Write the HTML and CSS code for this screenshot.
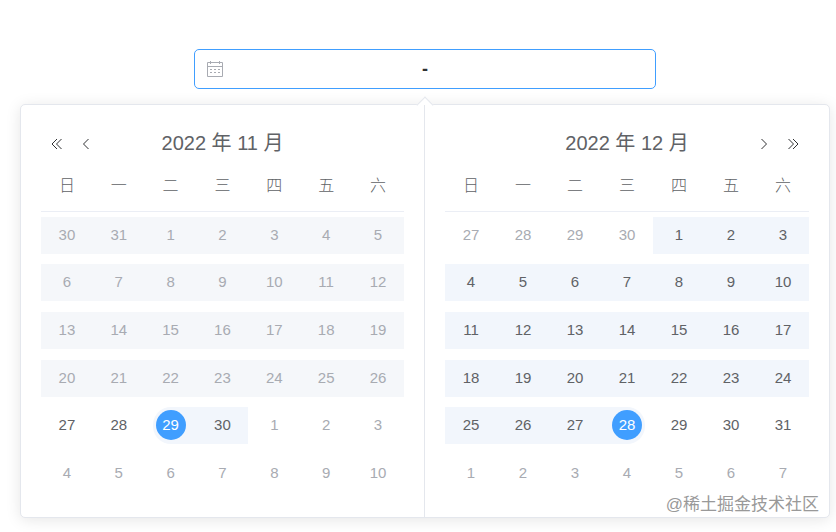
FILE: index.html
```html
<!DOCTYPE html>
<html lang="zh-CN">
<head>
    <meta charset="UTF-8">
    <meta name="viewport" content="width=device-width, initial-scale=1.0">
    <title>日期范围选择</title>
    <link rel="stylesheet" href="styles.css">
</head>
<body>
    <div class="container">
        <!-- 输入框 -->
        <div class="range-editor">
            <svg class="icon-date" viewBox="0 0 18 18" width="18" height="18" fill="none" stroke="#a8abb2">
                <path d="M1.500 2.500h15v14h-15zM1.500 6.500h15M4.500 1v3M13.500 1v3"/>
                <path d="M4 9.500h2M8 9.500h2M12 9.500h2M4 12.500h2M8 12.500h2M12 12.500h2"/>
            </svg>
            <input class="range-input" type="text" aria-label="开始日期">
            <span class="range-separator">-</span>
            <input class="range-input" type="text" aria-label="结束日期">
        </div>

        <!-- 日期面板 -->
        <div class="picker-panel">
            <div class="panel-arrow"></div>
            <div class="calendar calendar-left">
                <div class="calendar-header">
                    <div class="header-buttons">
                        <button type="button" class="icon-btn" aria-label="上一年">
                            <svg viewBox="0 0 12 12" width="12" height="12"><path d="M6 1L1 6l5 5M10.500 1l-5 5 5 5"/></svg>
                        </button>
                        <button type="button" class="icon-btn" aria-label="上个月">
                            <svg viewBox="0 0 12 12" width="12" height="12"><path d="M7.500 1l-5 5 5 5"/></svg>
                        </button>
                    </div>
                    <div class="calendar-title">2022 年 11 月</div>
                    <div class="header-buttons"></div>
                </div>
                <table class="date-table">
                    <thead>
                        <tr><th>日</th><th>一</th><th>二</th><th>三</th><th>四</th><th>五</th><th>六</th></tr>
                    </thead>
                    <tbody>
                        <tr class="disabled"><td><div>30</div></td><td><div>31</div></td><td><div>1</div></td><td><div>2</div></td><td><div>3</div></td><td><div>4</div></td><td><div>5</div></td></tr>
                        <tr class="disabled"><td><div>6</div></td><td><div>7</div></td><td><div>8</div></td><td><div>9</div></td><td><div>10</div></td><td><div>11</div></td><td><div>12</div></td></tr>
                        <tr class="disabled"><td><div>13</div></td><td><div>14</div></td><td><div>15</div></td><td><div>16</div></td><td><div>17</div></td><td><div>18</div></td><td><div>19</div></td></tr>
                        <tr class="disabled"><td><div>20</div></td><td><div>21</div></td><td><div>22</div></td><td><div>23</div></td><td><div>24</div></td><td><div>25</div></td><td><div>26</div></td></tr>
                        <tr>
                            <td><div>27</div></td>
                            <td><div>28</div></td>
                            <td class="in-range start-date"><div><span>29</span></div></td>
                            <td class="in-range"><div>30</div></td>
                            <td class="other-month"><div>1</div></td>
                            <td class="other-month"><div>2</div></td>
                            <td class="other-month"><div>3</div></td>
                        </tr>
                        <tr class="other-month"><td><div>4</div></td><td><div>5</div></td><td><div>6</div></td><td><div>7</div></td><td><div>8</div></td><td><div>9</div></td><td><div>10</div></td></tr>
                    </tbody>
                </table>
            </div>
            <div class="calendar">
                <div class="calendar-header">
                    <div class="header-buttons"></div>
                    <div class="calendar-title">2022 年 12 月</div>
                    <div class="header-buttons header-buttons-right">
                        <button type="button" class="icon-btn" aria-label="下个月">
                            <svg viewBox="0 0 12 12" width="12" height="12"><path d="M4.500 1l5 5-5 5"/></svg>
                        </button>
                        <button type="button" class="icon-btn" aria-label="下一年">
                            <svg viewBox="0 0 12 12" width="12" height="12"><path d="M1.500 1l5 5-5 5M6 1l5 5-5 5"/></svg>
                        </button>
                    </div>
                </div>
                <table class="date-table">
                    <thead>
                        <tr><th>日</th><th>一</th><th>二</th><th>三</th><th>四</th><th>五</th><th>六</th></tr>
                    </thead>
                    <tbody>
                        <tr>
                            <td class="other-month"><div>27</div></td>
                            <td class="other-month"><div>28</div></td>
                            <td class="other-month"><div>29</div></td>
                            <td class="other-month"><div>30</div></td>
                            <td class="in-range"><div>1</div></td>
                            <td class="in-range"><div>2</div></td>
                            <td class="in-range"><div>3</div></td>
                        </tr>
                        <tr class="in-range"><td><div>4</div></td><td><div>5</div></td><td><div>6</div></td><td><div>7</div></td><td><div>8</div></td><td><div>9</div></td><td><div>10</div></td></tr>
                        <tr class="in-range"><td><div>11</div></td><td><div>12</div></td><td><div>13</div></td><td><div>14</div></td><td><div>15</div></td><td><div>16</div></td><td><div>17</div></td></tr>
                        <tr class="in-range"><td><div>18</div></td><td><div>19</div></td><td><div>20</div></td><td><div>21</div></td><td><div>22</div></td><td><div>23</div></td><td><div>24</div></td></tr>
                        <tr>
                            <td class="in-range"><div>25</div></td>
                            <td class="in-range"><div>26</div></td>
                            <td class="in-range"><div>27</div></td>
                            <td class="in-range end-date"><div><span>28</span></div></td>
                            <td><div>29</div></td>
                            <td><div>30</div></td>
                            <td><div>31</div></td>
                        </tr>
                        <tr class="other-month"><td><div>1</div></td><td><div>2</div></td><td><div>3</div></td><td><div>4</div></td><td><div>5</div></td><td><div>6</div></td><td><div>7</div></td></tr>
                    </tbody>
                </table>
            </div>
            <div class="watermark">@稀土掘金技术社区</div>
        </div>
    </div>
</body>
</html>
```
FILE: styles.css
```css
* {
    box-sizing: border-box;
}

body {
    margin: 0;
    background-color: #fff;
    color: #606266;
    font-family: "Liberation Sans", "Noto Sans CJK SC", sans-serif;
    font-size: 15px;
}

.container {
    padding: 49px 6px 14px 20px;
}

/* 输入框 */
.range-editor {
    position: relative;
    z-index: 1;
    display: flex;
    align-items: center;
    max-width: 462px;
    height: 40px;
    margin: 0 auto 15px;
    padding: 0 11px;
    background-color: #fff;
    border: 1px solid #409eff;
    border-radius: 5px;
}

.icon-date {
    flex: none;
}

.range-input {
    flex: 1;
    min-width: 0;
    height: 30px;
    padding: 0;
    border: none;
    outline: none;
    background: none;
    color: #606266;
    font: inherit;
    text-align: center;
}

.range-input:last-child {
    margin-right: 18px;
}

.range-separator {
    color: #303133;
    font-size: 18px;
    font-weight: bold;
}

/* 日期面板 */
.picker-panel {
    position: relative;
    display: flex;
    background-color: #fff;
    border: 1px solid #e4e7ed;
    border-radius: 5px;
    box-shadow: 0 2px 15px rgba(0, 0, 0, 0.1);
}

.panel-arrow {
    position: absolute;
    top: -6px;
    left: 50%;
    width: 12px;
    height: 12px;
    margin-left: -6px;
    background-color: #fff;
    border: 1px solid #e4e7ed;
    border-right: none;
    border-bottom: none;
    transform: rotate(45deg);
}

.calendar {
    position: relative;
    width: 50%;
    padding: 20px;
}

.calendar-left {
    border-right: 1px solid #e4e7ed;
}

.calendar-header {
    display: flex;
    align-items: center;
    height: 36px;
}

.header-buttons {
    display: flex;
    gap: 18px;
    width: 80px;
    padding: 2px 10px 0;
}

.header-buttons-right {
    justify-content: flex-end;
}

.calendar-title {
    flex: 1;
    font-size: 20px;
    line-height: 30px;
    text-align: center;
}

.icon-btn {
    display: flex;
    padding: 0;
    border: none;
    background: none;
    cursor: pointer;
}

.icon-btn svg {
    fill: none;
    stroke: #303133;
}

.date-table {
    width: 100%;
    height: 336px;
    border-collapse: collapse;
    table-layout: fixed;
    text-align: center;
}

.date-table th {
    height: 50px;
    padding: 0 0 4px;
    border-bottom: 1px solid #ebeef5;
    font-size: 16px;
    font-weight: 300;
}

.date-table td {
    padding: 5px 0;
}

.date-table td div {
    height: 37px;
    line-height: 36px;
}

.date-table .other-month {
    color: #a8abb2;
}

.date-table .disabled {
    color: #a8abb2;
}

.disabled div {
    background-color: #f5f7fa;
}

.in-range div {
    background-color: #f2f6fc;
}

.start-date div {
    margin-left: 8px;
    padding-right: 8px;
    border-radius: 18px 0 0 18px;
}

.end-date div {
    margin-right: 8px;
    padding-left: 8px;
    border-radius: 0 18px 18px 0;
}

.start-date span,
.end-date span {
    display: inline-block;
    width: 30px;
    height: 30px;
    background-color: #409eff;
    border-radius: 50%;
    color: #fff;
    line-height: 30px;
}

/* 水印 */
.watermark {
    position: absolute;
    right: 10px;
    bottom: 0;
    color: #999;
    font-size: 17px;
    line-height: 24px;
    text-shadow: 1px 1px 1px #fff;
}
```
